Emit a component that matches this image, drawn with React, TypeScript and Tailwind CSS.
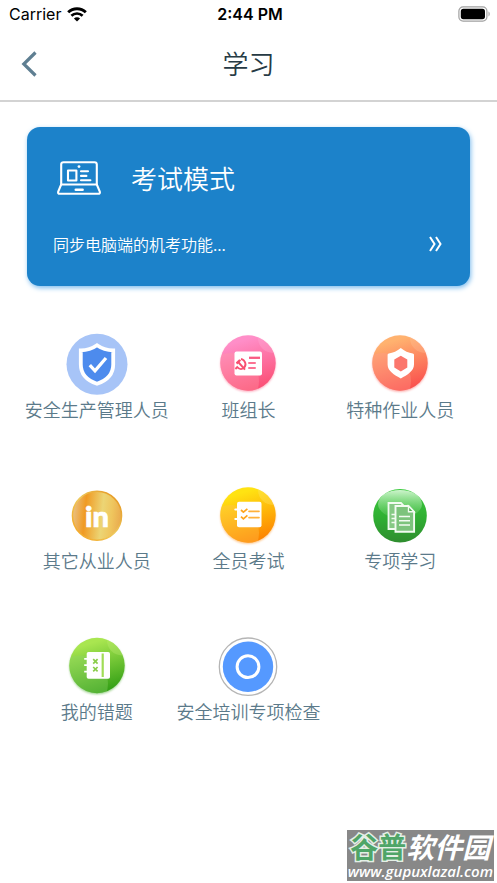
import * as React from "react"

function BackIcon() {
  return (
    <svg viewBox="0 0 16 26" className="h-[26px] w-4" fill="none" aria-hidden="true">
      <path d="M14.500 1.500 2.800 13l11.700 11.500" stroke="#5f7f92" strokeWidth="3.2" />
    </svg>
  )
}

function WifiIcon() {
  return (
    <svg viewBox="0 0 20 15" className="h-[15px] w-5" fill="none" aria-hidden="true">
      <path d="M1.200 5.300a12.600 12.600 0 0 1 17.600 0" stroke="#000" strokeWidth="2.9" />
      <path d="M4.400 8.800a8 8 0 0 1 11.200 0" stroke="#000" strokeWidth="2.7" />
      <path d="M10 14.600 6.900 11.500a4.400 4.400 0 0 1 6.200 0z" fill="#000" />
    </svg>
  )
}

function BatteryIcon() {
  return (
    <svg viewBox="0 0 33 16" className="h-4 w-[33px]" aria-hidden="true">
      <rect x="0.9" y="0.9" width="28" height="14.2" rx="4.2" fill="#fff" stroke="#a0a0a0" strokeWidth="1.2" />
      <rect x="2.8" y="2.8" width="24.2" height="10.4" rx="2.6" fill="#000" />
      <path d="M30.5 5.6c1.6.6 1.6 4.2 0 4.8z" fill="#a0a0a0" />
    </svg>
  )
}

function LaptopIcon() {
  return (
    <svg
      viewBox="0 0 44 34"
      className="h-[34px] w-11"
      fill="none"
      stroke="#fff"
      strokeWidth="2.1"
      strokeLinejoin="round"
      strokeLinecap="round"
      aria-hidden="true"
    >
      <path d="M4.200 23.500V3.500q0-2.300 2.300-2.300h31q2.300 0 2.300 2.300v20" />
      <path d="M4.200 23.500h35.600l3 7.200q.5 2.100-1.600 2.100H2.800q-2.100 0-1.600-2.100z" />
      <rect x="11" y="9.5" width="8.4" height="10" />
      <path d="M24 10.300h7M24 14.900h5.400M24 19.300h9.400" />
      <path d="M18.800 28.800h6.800" strokeWidth="2.6" />
      <circle cx="22" cy="5.6" r="1.4" fill="#fff" stroke="none" />
    </svg>
  )
}

function DoubleChevron() {
  return (
    <svg viewBox="0 0 13 16" className="h-4 w-[13px]" fill="none" stroke="#fff" strokeWidth="2" aria-hidden="true">
      <path d="M1 1l4.500 7L1 15M7 1l4.500 7L7 15" />
    </svg>
  )
}

function Icon({ children }: { children: React.ReactNode }) {
  return (
    <svg viewBox="0 0 64 64" className="size-16" fill="none" aria-hidden="true">
      {children}
    </svg>
  )
}

// Round badge with two translucent swirls over a vertical gradient
function Badge({
  id,
  cy,
  from,
  to,
  sheen,
  corner,
}: {
  id: string
  cy: number
  from: string
  to: string
  sheen: string
  corner: string
}) {
  return (
    <>
      <defs>
        <linearGradient id={id} x1="0.35" y1="0" x2="0.65" y2="1">
          <stop offset="0.1" stopColor={from} />
          <stop offset="0.95" stopColor={to} />
        </linearGradient>
        <clipPath id={`${id}-clip`}>
          <circle cx="32" cy={cy} r="27.7" />
        </clipPath>
        <filter id={`${id}-shadow`} x="-20%" y="-20%" width="140%" height="140%">
          <feGaussianBlur stdDeviation="1.3" />
        </filter>
      </defs>
      <circle cx="32" cy={cy + 1.3} r="27.5" fill={to} opacity="0.5" filter={`url(#${id}-shadow)`} />
      <circle cx="32" cy={cy} r="27.7" fill={`url(#${id})`} />
      <g clipPath={`url(#${id}-clip)`}>
        <circle cx="15" cy={cy + 18} r="28" fill={sheen} opacity="0.35" />
        <circle cx="57" cy={cy - 25} r="15" fill={corner} opacity="0.3" />
      </g>
    </>
  )
}

function SafetyIcon() {
  return (
    <Icon>
      <circle cx="32" cy="32.2" r="30.5" fill="#a7c4f7" />
      <path
        d="M32 13.200c5 3.500 10.600 5 16.200 5.100v14.200c0 9.500-6.500 16-16.200 19.300-9.700-3.300-16.200-9.800-16.200-19.300V18.300c5.600-.1 11.200-1.600 16.200-5.100z"
        fill="#4d8bed"
        stroke="#fff"
        strokeWidth="3.8"
      />
      <path d="m24.800 33.200 5.200 5.600 11-12.800" stroke="#fff" strokeWidth="3.3" />
    </Icon>
  )
}

function TeamLeadIcon() {
  return (
    <Icon>
      <Badge id="pink" cy={31} from="#ff8ec8" to="#fb5177" sheen="#ff9ba8" corner="#ffb0d8" />
      <rect x="18.5" y="19.5" width="27.5" height="24" rx="2" fill="#fff" />
      <path d="M33 25.800h11" stroke="#f95b83" strokeWidth="2.3" />
      <path d="M33 31h6M33 36h6" stroke="#fb7293" strokeWidth="2" strokeLinecap="round" />
      <path d="M25 26.800c4.600 1.400 6 6.600 2.600 9.200-2 1.600-4.800 1-6.400-.8l-1.800 1.800" stroke="#f84f70" strokeWidth="1.9" />
      <path d="m22.200 30 6.800 7.600" stroke="#f84f70" strokeWidth="1.9" />
      <path d="m19.800 30.600 3.400-3.300 2 1.200-4 4z" fill="#f84f70" />
    </Icon>
  )
}

function SpecialWorkIcon() {
  return (
    <Icon>
      <Badge id="coral" cy={31} from="#ffb26f" to="#fa524e" sheen="#ff9e8d" corner="#ffc49a" />
      <path
        d="M32.800 16c3.600 3.200 7.800 4.800 12 5.400q1.200.2 1.200 1.400v9.700c0 6.600-6.600 10.200-13.200 14-6.600-3.800-13.200-7.400-13.200-14v-9.700q0-1.200 1.200-1.400c4.200-.6 8.400-2.200 12-5.400z"
        fill="#fff"
      />
      <path d="m32.800 23.800 6.500 3.700v8.100l-6.500 3.900-6.500-3.900v-8.100z" fill="#fb766c" />
    </Icon>
  )
}

function OtherStaffIcon() {
  return (
    <Icon>
      <defs>
        <linearGradient id="gold" x1="0" y1="0.45" x2="1" y2="0.55">
          <stop offset="0" stopColor="#e9c184" />
          <stop offset="0.25" stopColor="#f09a23" />
          <stop offset="0.6" stopColor="#ecd575" />
          <stop offset="0.8" stopColor="#efc55d" />
          <stop offset="1" stopColor="#e9a94e" />
        </linearGradient>
        <linearGradient id="gold-rim" x1="0" y1="1" x2="1" y2="0">
          <stop offset="0" stopColor="#f6a11c" />
          <stop offset="0.5" stopColor="#edc95c" />
          <stop offset="1" stopColor="#e58e16" />
        </linearGradient>
      </defs>
      <circle cx="32" cy="32.7" r="24.5" fill="url(#gold)" stroke="url(#gold-rim)" strokeWidth="1.6" />
      <text
        x="32"
        y="43.5"
        textAnchor="middle"
        fill="#fff"
        stroke="#fff"
        strokeWidth="0.7"
        className="font-['Lato'] text-[29px] font-black"
      >
        in
      </text>
    </Icon>
  )
}

function AllStaffExamIcon() {
  return (
    <Icon>
      <Badge id="yellow" cy={32} from="#ffe312" to="#fd8500" sheen="#ffc557" corner="#ffe878" />
      <rect x="21" y="18.7" width="24.5" height="25.6" rx="2" fill="#fff" />
      <path d="M19.200 26.500h3M19.200 36h3" stroke="#fff" strokeWidth="1.8" strokeLinecap="round" />
      <path d="m25 27 2.400 2.200 4-3.400M25 33.600l2.400 2.200 4-3.400" stroke="#ffa41b" strokeWidth="1.7" />
      <path d="M33 28.300h10M33 34.600h10" stroke="#ffb13a" strokeWidth="1.7" strokeLinecap="round" />
    </Icon>
  )
}

function TopicStudyIcon() {
  return (
    <Icon>
      <defs>
        <linearGradient id="glass" x1="0" y1="0" x2="0" y2="1">
          <stop offset="0" stopColor="#3dcb3f" />
          <stop offset="0.55" stopColor="#2fae32" />
          <stop offset="1" stopColor="#2f8d2f" />
        </linearGradient>
        <linearGradient id="glass-shine" x1="0" y1="0" x2="0" y2="1">
          <stop offset="0" stopColor="#d5f6d4" stopOpacity="0.95" />
          <stop offset="1" stopColor="#6fd46d" stopOpacity="0.2" />
        </linearGradient>
      </defs>
      <circle cx="32" cy="32.7" r="26.8" fill="url(#glass)" />
      <ellipse cx="32" cy="21" rx="22" ry="14" fill="url(#glass-shine)" />
      <path d="M20.500 20h12.500l4 4v22H20.500z" fill="#86c985" stroke="#f2fbf1" strokeWidth="1.8" />
      <path d="M23.500 31.500h4M23.500 35.500h4M23.500 39.500h4" stroke="#f2fbf1" strokeWidth="1.3" />
      <path d="M27.500 23h13l5.600 5.800v20H27.500z" fill="#7cc37c" stroke="#f2fbf1" strokeWidth="1.9" />
      <path d="M40.500 23v5.800h5.600z" fill="#4eb04e" stroke="#f2fbf1" strokeWidth="1.4" />
      <path d="M31 33.500h11M31 37.700h11M31 42h11" stroke="#f2fbf1" strokeWidth="1.4" />
    </Icon>
  )
}

function MistakesIcon() {
  return (
    <Icon>
      <Badge id="lime" cy={31.5} from="#a9e650" to="#36a117" sheen="#8ed36c" corner="#c4f07a" />
      <rect x="21.7" y="18" width="23.3" height="26.7" rx="1.8" fill="#fff" />
      <path d="M19.200 24.800h3.500M19.200 31.200h3.500M19.200 37.600h3.500" stroke="#fff" strokeWidth="1.7" />
      <path d="M37.700 19.500v23.500" stroke="#a0dd55" strokeWidth="2.2" />
      <path
        d="m28.200 25.200 4.400 4.400M32.600 25.200l-4.400 4.400M28.200 33l4.400 4.400M32.600 33l-4.400 4.400"
        stroke="#8acd4a"
        strokeWidth="1.7"
      />
    </Icon>
  )
}

function InspectionIcon() {
  return (
    <Icon>
      <circle cx="32" cy="32.7" r="28.7" fill="#fff" stroke="#b5b5b5" strokeWidth="1.3" />
      <circle cx="32" cy="32.7" r="25.2" fill="#5599ff" />
      <circle cx="32" cy="32.7" r="10.9" stroke="#fff" strokeWidth="3" />
    </Icon>
  )
}

const categories = [
  { title: "安全生产管理人员", icon: SafetyIcon },
  { title: "班组长", icon: TeamLeadIcon },
  { title: "特种作业人员", icon: SpecialWorkIcon },
  { title: "其它从业人员", icon: OtherStaffIcon },
  { title: "全员考试", icon: AllStaffExamIcon },
  { title: "专项学习", icon: TopicStudyIcon },
  { title: "我的错题", icon: MistakesIcon },
  { title: "安全培训专项检查", icon: InspectionIcon },
]

function StatusBar() {
  return (
    <div className="grid h-7 grid-cols-3 items-center pr-1.5 pl-[9px] font-['Inter'] text-base leading-7 text-black">
      <div className="flex items-center gap-1.5">
        <span>Carrier</span>
        <WifiIcon />
      </div>
      <span className="text-center font-semibold">2:44 PM</span>
      <div className="flex justify-end">
        <BatteryIcon />
      </div>
    </div>
  )
}

export default function App() {
  return (
    <div className="flex min-h-screen flex-col bg-white font-['Noto_Sans_CJK_SC',sans-serif]">
      <StatusBar />
      <header className="grid h-[74px] grid-cols-[64px_1fr_64px] items-center border-b-2 border-[#d3d3d3]">
        <button type="button" aria-label="返回" className="flex h-12 items-center pl-[21px]">
          <BackIcon />
        </button>
        <h1 className="pb-0.5 text-center text-[26px] leading-10 font-[350] text-[#263a44]">学习</h1>
      </header>

      <main className="px-[21px] pt-[25px]">
        <div className="px-1.5">
          <button
            type="button"
            className="flex w-full flex-col gap-6 rounded-[13px] bg-[#1c82ca] pt-[31px] pr-7 pb-7 pl-[26px] text-left text-white shadow-[1px_2px_5px_#7fbdee]"
          >
            <span className="flex items-center gap-[30px] pl-1">
              <LaptopIcon />
              <span className="text-[26px] leading-10 font-[350]">考试模式</span>
            </span>
            <span className="flex w-full items-center justify-between pt-2">
              <span className="text-base leading-7 font-[350]">同步电脑端的机考功能...</span>
              <DoubleChevron />
            </span>
          </button>
        </div>

        <div className="grid grid-cols-3 gap-y-[61px] pt-[46px]">
          {categories.map((item) => (
            <button key={item.title} type="button" className="flex flex-col items-center">
              <item.icon />
              <span className="text-lg leading-[26px] font-[350] whitespace-nowrap text-[#5b7a8a]">{item.title}</span>
            </button>
          ))}
        </div>
      </main>

      <footer className="mt-auto mr-[3px] mb-0.5 flex flex-col items-center self-end bg-[#888] px-px pb-0.5 whitespace-nowrap text-white">
        <span className="px-0.5 text-[28px] leading-[33px] font-bold">
          <span className="text-[#4fa568] [-webkit-text-stroke:3px_#e4efe6] [paint-order:stroke_fill]">谷普</span>
          <span className="italic">软件园</span>
        </span>
        <span className="font-['Open_Sans'] text-[15px] leading-4 font-semibold italic">www.gupuxlazal.com</span>
      </footer>
    </div>
  )
}
